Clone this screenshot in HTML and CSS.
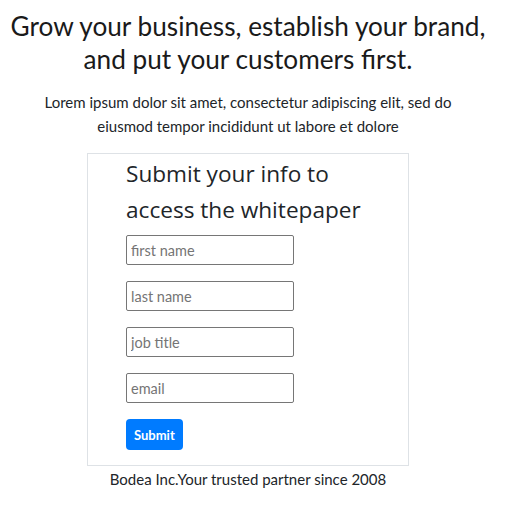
FILE: index.html
```html
<!DOCTYPE html>
<html>
<head>
<meta charset="utf-8">
<link rel="stylesheet" href="styles.css">
</head>
<body>
<div class="page">
  <h1 class="headline">Grow your business, establish your brand,<br>and put your customers first.</h1>
  <p class="lead">Lorem ipsum dolor sit amet, consectetur adipiscing elit, sed do<br>eiusmod tempor incididunt ut labore et dolore</p>
  <div class="card">
    <h2 class="card-title">Submit your info to<br>access the whitepaper</h2>
    <form class="form">
      <input class="field" type="text" placeholder="first name">
      <input class="field" type="text" placeholder="last name">
      <input class="field" type="text" placeholder="job title">
      <input class="field" type="text" placeholder="email">
      <button class="btn" type="button">Submit</button>
    </form>
  </div>
  <p class="footer">Bodea Inc.Your trusted partner since 2008</p>
</div>
</body>
</html>
```
FILE: styles.css
```css
html, body {
  margin: 0;
  padding: 0;
  background: #fff;
}
.page {
  width: 496px;
  display: flex;
  flex-direction: column;
  align-items: center;
  font-family: Lato, sans-serif;
  color: #212529;
}
.headline {
  margin: 10px 0 0;
  font-size: 26.2px;
  font-weight: 400;
  line-height: 33px;
  text-align: center;
  color: #1a1a1a;
}
.lead {
  margin: 14px 0 0;
  font-size: 15px;
  line-height: 24px;
  text-align: center;
}
.card {
  margin-top: 15px;
  width: 322px;
  height: 313px;
  border: 1px solid #dee2e6;
  padding: 0 0 0 38px;
  box-sizing: border-box;
}
.card-title {
  margin: 2px 0 0;
  font-family: "Open Sans", sans-serif;
  font-size: 22.6px;
  font-weight: 400;
  line-height: 36px;
}
.form {
  display: flex;
  flex-direction: column;
  align-items: flex-start;
  gap: 16px;
  margin-top: 7px;
}
.field {
  width: 168px;
  height: 30px;
  box-sizing: border-box;
  border: 1px solid #767676;
  border-radius: 2px;
  padding: 0 4px;
  font-family: Lato, sans-serif;
  font-size: 14.5px;
  color: #212529;
}
.field::placeholder {
  color: #757575;
}
.btn {
  height: 31px;
  padding: 0 8px;
  border: none;
  border-radius: 4px;
  background: #007bff;
  color: #fff;
  font-family: Lato, sans-serif;
  font-size: 13px;
  font-weight: 700;
}
.footer {
  margin: 3px 0 0;
  font-size: 15px;
  line-height: 20px;
  text-align: center;
}
```
